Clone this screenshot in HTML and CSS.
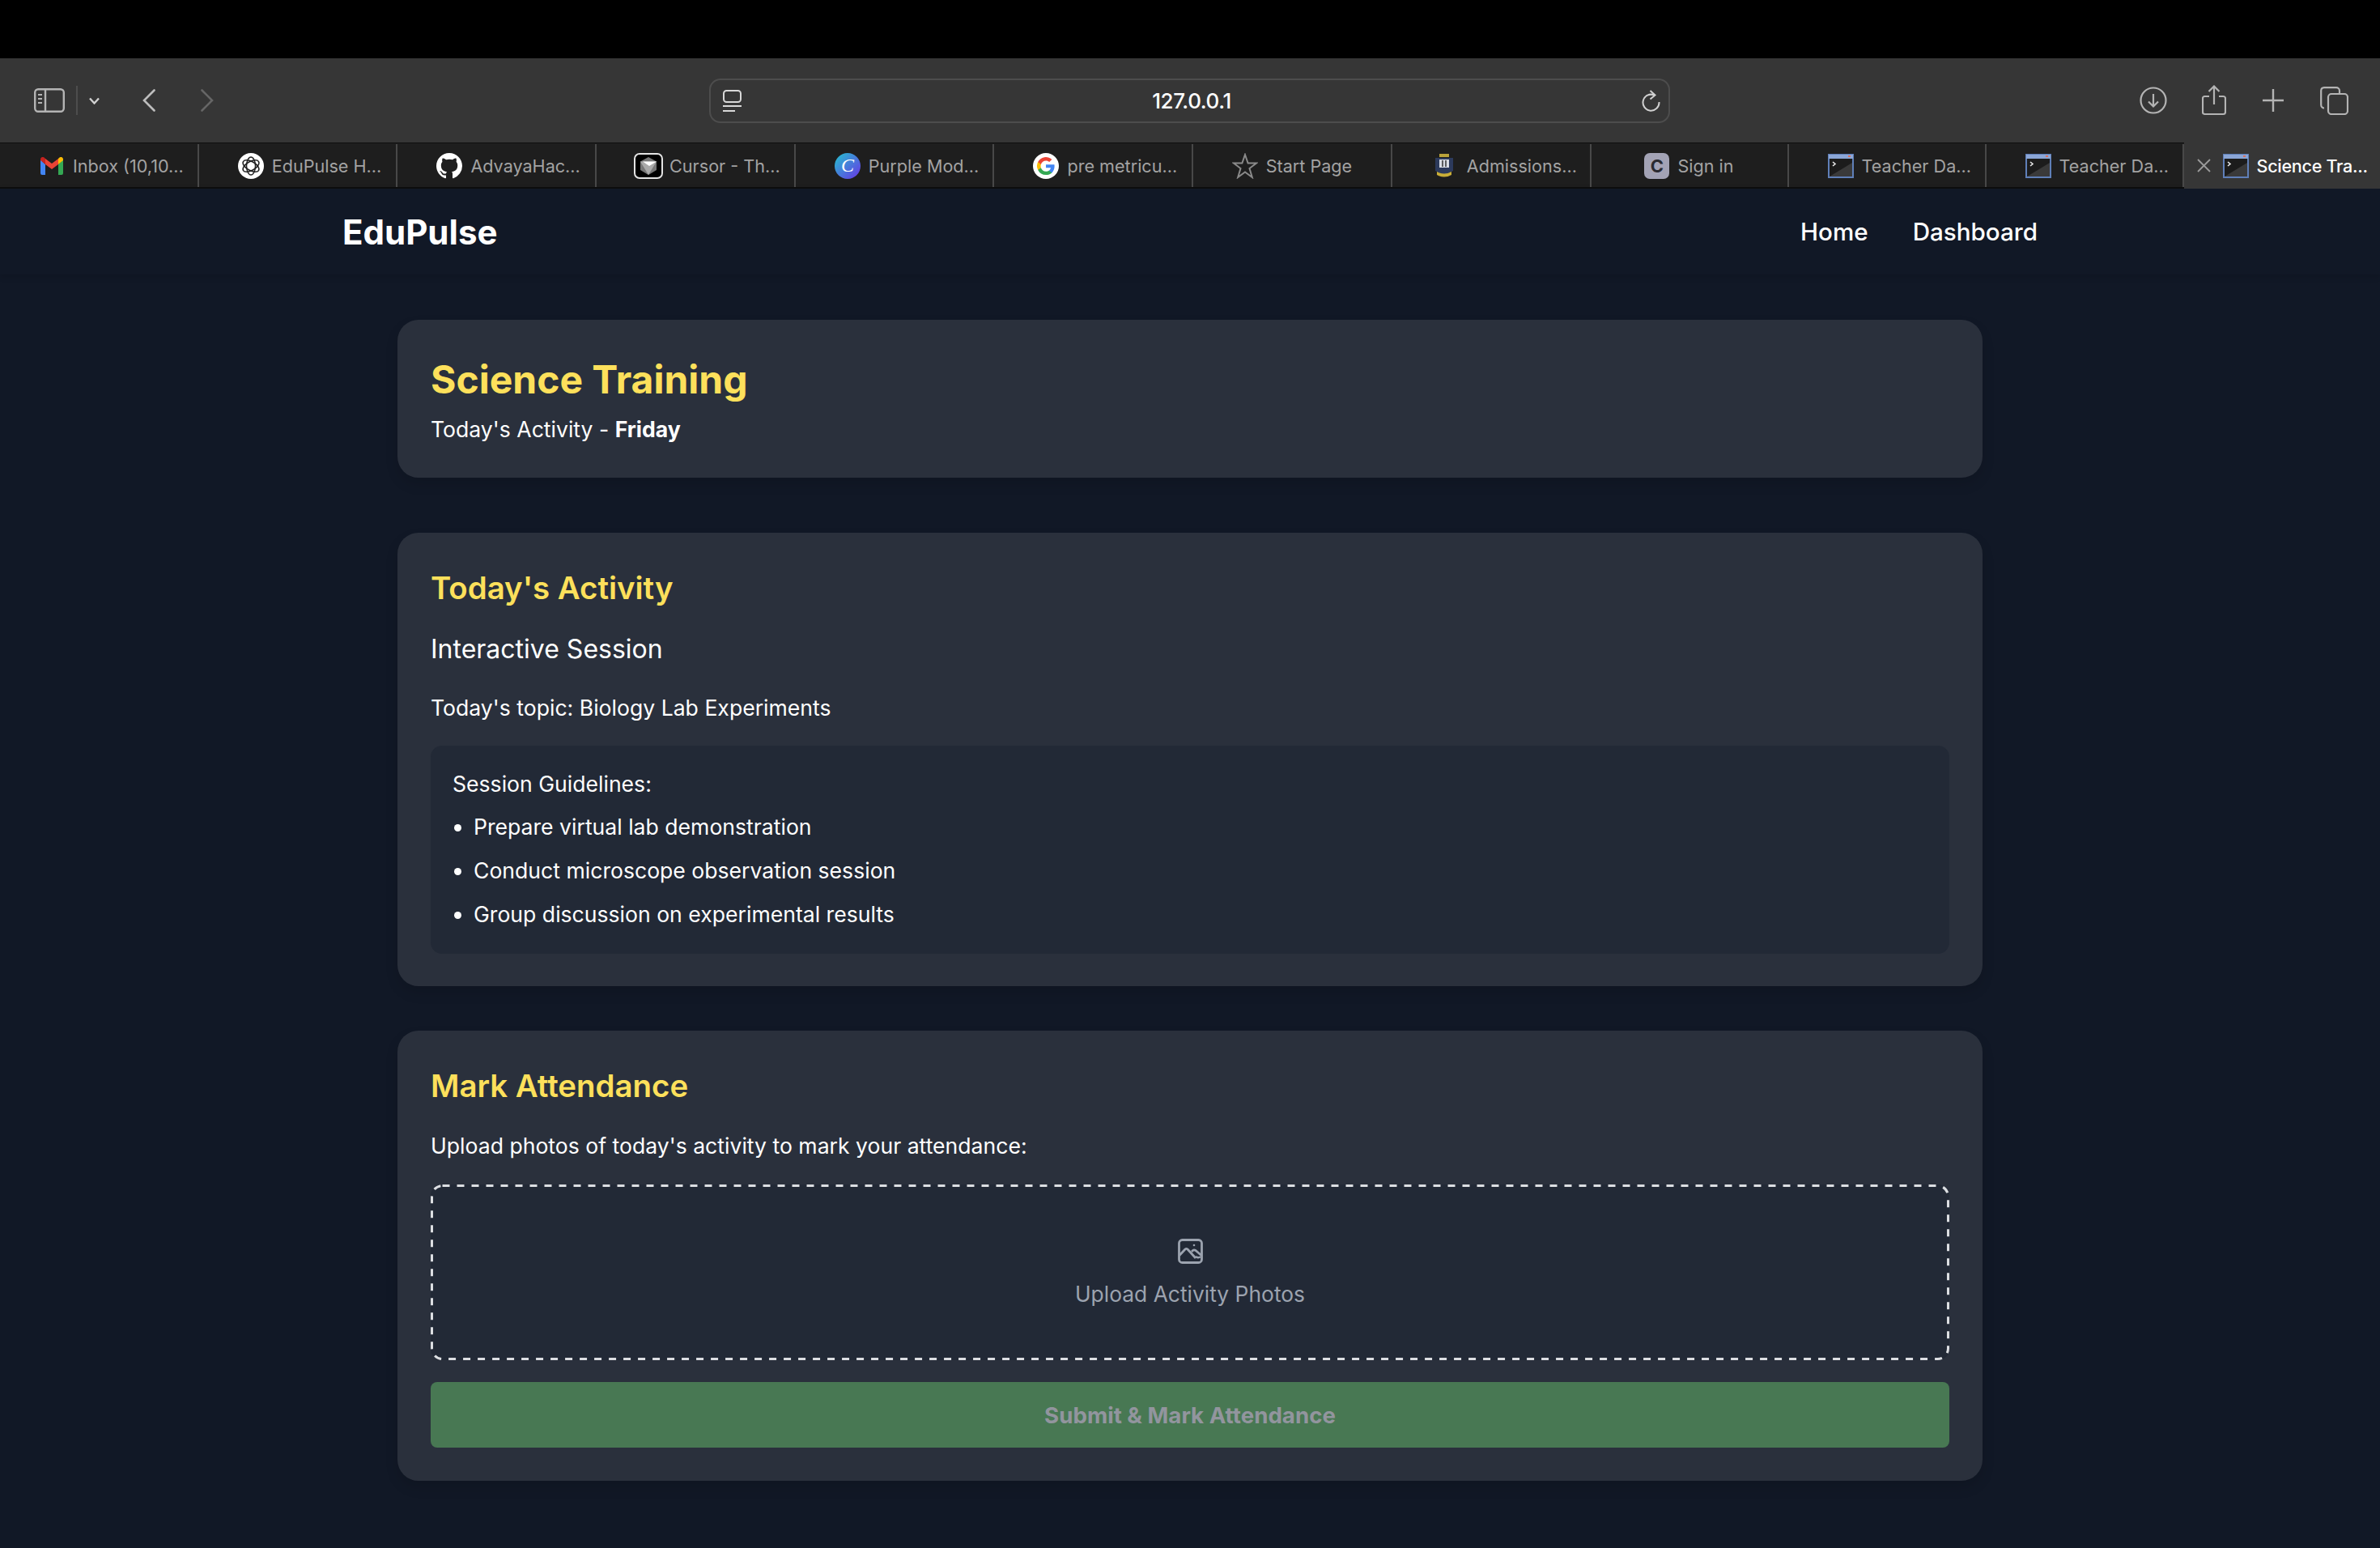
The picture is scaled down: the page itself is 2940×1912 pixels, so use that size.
FILE: index.html
```html
<!DOCTYPE html>
<html lang="en">
<head>
  <meta charset="UTF-8">
  <title>Science Training</title>
  <link rel="stylesheet" href="styles.css">
</head>
<body>
  <svg class="defs" width="0" height="0">
    <symbol id="term" viewBox="0 0 32 32">
      <rect x="0" y="1" width="32" height="30" fill="#5f7fb8"/>
      <rect x="1" y="2" width="30" height="5" fill="#8ba6d6"/>
      <rect x="25" y="3" width="3" height="2" fill="#d9705f"/>
      <rect x="2" y="7" width="28" height="22" fill="#1c1c1c"/>
      <path d="M2 29 30 29 30 12Z" fill="#3a3a3a"/>
      <path d="M6 11l3 2.5-3 2.5" fill="none" stroke="#e8e8e8" stroke-width="1.6"/>
    </symbol>
  </svg>

  <div class="menubar"></div>

  <div class="toolbar">
    <div class="tool-left">
      <svg class="ic-sidebar" width="38" height="30" viewBox="0 0 38 30" fill="none" stroke="#b4b4b4" stroke-width="2.4">
        <rect x="1.2" y="1.2" width="35.6" height="27.6" rx="4"/>
        <path d="M14 1.2v27.6"/>
        <path d="M5 8h5M5 13h5M5 18h5" stroke-width="2"/>
      </svg>
      <span class="tool-sep"></span>
      <svg class="ic-down" width="15" height="9" viewBox="0 0 15 9" fill="none" stroke="#d0d0d0" stroke-width="2.4"><path d="M2 1.5l5.500 6 5.500-6"/></svg>
      <svg class="ic-back" width="16" height="28" viewBox="0 0 16 28" fill="none" stroke="#bdbdbd" stroke-width="2.6" stroke-linecap="round"><path d="M14.500 1.500 2 14l12.500 12.500"/></svg>
      <svg class="ic-fwd" width="16" height="28" viewBox="0 0 16 28" fill="none" stroke="#666" stroke-width="2.6" stroke-linecap="round"><path d="M1.500 1.500 14 14 1.500 26.500"/></svg>
    </div>
    <div class="urlbar">
      <svg width="23" height="27" viewBox="0 0 23 27" fill="none" stroke="#d8d8d8" stroke-width="2">
        <rect x="1" y="1" width="21" height="14" rx="3.500"/>
        <path d="M0 20h23M0 26h15"/>
      </svg>
      <span class="url-text">127.0.0.1</span>
      <svg width="23" height="27" viewBox="0 0 23 27" fill="none" stroke="#d0d0d0" stroke-width="2">
        <path d="M15.500 6.500A10 10 0 1 0 21.500 15"/>
        <path d="M10.500 1l6 5.500-6 5"/>
      </svg>
    </div>
    <div class="tool-right">
      <svg width="34" height="34" viewBox="0 0 34 34" fill="none" stroke="#b4b4b4" stroke-width="2.200">
        <circle cx="17" cy="17" r="15.500"/>
        <path d="M17 9v15M11 18.500l6 6 6-6"/>
      </svg>
      <svg width="30" height="38" viewBox="0 0 30 38" fill="none" stroke="#b4b4b4" stroke-width="2.200">
        <path d="M9 14H3.500A2.500 2.500 0 0 0 1 16.500v17A2.500 2.500 0 0 0 3.500 36h23a2.500 2.500 0 0 0 2.500-2.500v-17a2.500 2.500 0 0 0-2.500-2.500H21"/>
        <path d="M15 24V2M8.500 8 15 1.500 21.500 8"/>
      </svg>
      <svg width="26" height="28" viewBox="0 0 26 28" fill="none" stroke="#b4b4b4" stroke-width="2.400"><path d="M13 0v28M0 14h26"/></svg>
      <svg width="35" height="35" viewBox="0 0 35 35" fill="none" stroke="#b4b4b4" stroke-width="2.200">
        <rect x="10" y="9" width="24" height="25" rx="4"/>
        <path d="M5 26.500A4 4 0 0 1 1.200 22.500V5A4 4 0 0 1 5 1.200h15A4 4 0 0 1 24 5v4"/>
      </svg>
    </div>
  </div>

  <div class="tabs">
    <div class="tab">
      <svg class="fav-m" width="28" height="22" viewBox="0 0 28 22">
        <path d="M0 3v17a2 2 0 0 0 2 2h4V9z" fill="#4285f4"/>
        <path d="M28 3v17a2 2 0 0 1-2 2h-4V9z" fill="#34a853"/>
        <path d="M22 2v7l6 -5V3c0-3-3-4-5-2z" fill="#fbbc04"/>
        <path d="M6 2v7l8 6 8-6V2l-8 6z" fill="#ea4335"/>
        <path d="M0 3v1l6 5V2L5 1C3-1 0 0 0 3z" fill="#c5221f"/>
      </svg>
      <span>Inbox (10,10...</span>
    </div>
    <div class="tab">
      <svg class="fav" viewBox="0 0 32 32">
        <circle cx="16" cy="16" r="16" fill="#fff"/>
        <g fill="none" stroke="#222" stroke-width="1.500">
          <ellipse cx="16" cy="16" rx="11" ry="5.500" transform="rotate(30 16 16)"/>
          <ellipse cx="16" cy="16" rx="11" ry="5.500" transform="rotate(90 16 16)"/>
          <ellipse cx="16" cy="16" rx="11" ry="5.500" transform="rotate(150 16 16)"/>
        </g>
      </svg>
      <span>EduPulse H...</span>
    </div>
    <div class="tab">
      <svg class="fav" viewBox="0 0 16 16"><path fill="#fff" d="M8 0C3.58 0 0 3.58 0 8c0 3.54 2.29 6.53 5.47 7.59.4.07.55-.17.55-.38 0-.19-.01-.82-.01-1.490-2.010.37-2.530-.49-2.690-.94-.09-.23-.48-.94-.82-1.130-.28-.15-.68-.52-.01-.53.63-.01 1.080.58 1.230.82.72 1.210 1.870.87 2.330.66.07-.52.28-.87.51-1.070-1.780-.2-3.640-.89-3.640-3.950 0-.87.31-1.590.82-2.150-.08-.2-.36-1.020.08-2.120 0 0 .67-.21 2.200.82.64-.18 1.320-.27 2-.27.68 0 1.360.09 2 .27 1.530-1.040 2.200-.82 2.200-.82.44 1.100.16 1.920.08 2.120.51.56.82 1.270.82 2.150 0 3.070-1.870 3.750-3.650 3.950.29.25.54.73.54 1.480 0 1.070-.01 1.930-.01 2.200 0 .21.15.46.55.38A8.013 8.013 0 0 0 16 8c0-4.420-3.580-8-8-8z"/></svg>
      <span>AdvayaHac...</span>
    </div>
    <div class="tab tab-tight">
      <svg class="fav fav-cursor" viewBox="0 0 36 32">
        <rect x="1" y="1" width="34" height="30" rx="6" fill="#000" stroke="#e4e4e4" stroke-width="2"/>
        <path d="M18 5 28 10.500V21L18 27 8 21V10.500Z" fill="#777"/>
        <path d="M8 10.500 28 10.500 18 27Z" fill="#aaa"/>
        <path d="M11 10.500 28 10.500 19 16Z" fill="#fff"/>
      </svg>
      <span>Cursor - Th...</span>
    </div>
    <div class="tab">
      <svg class="fav" viewBox="0 0 32 32">
        <defs><linearGradient id="canva" x1="0" y1="0" x2="1" y2="1"><stop offset="0" stop-color="#23c4cf"/><stop offset="1" stop-color="#6a32e6"/></linearGradient></defs>
        <circle cx="16" cy="16" r="16" fill="url(#canva)"/>
        <text x="16" y="23" text-anchor="middle" class="fav-letter">C</text>
      </svg>
      <span>Purple Mod...</span>
    </div>
    <div class="tab">
      <svg class="fav" viewBox="0 0 32 32">
        <circle cx="16" cy="16" r="16" fill="#fff"/>
        <g transform="translate(5 5) scale(.92)">
          <path fill="#4285f4" d="M23.500 12.300c0-.8-.1-1.600-.2-2.300H12v4.500h6.500a5.500 5.500 0 0 1-2.400 3.600v3h3.900c2.200-2.100 3.500-5.100 3.500-8.800z"/>
          <path fill="#34a853" d="M12 24c3.200 0 6-1.100 8-2.900l-3.900-3c-1.100.7-2.500 1.200-4.100 1.200-3.100 0-5.800-2.100-6.700-5H1.300v3.100A12 12 0 0 0 12 24z"/>
          <path fill="#fbbc05" d="M5.300 14.300a7.200 7.200 0 0 1 0-4.600V6.600h-4a12 12 0 0 0 0 10.800z"/>
          <path fill="#ea4335" d="M12 4.800c1.800 0 3.300.6 4.600 1.800L20 3.200A12 12 0 0 0 1.300 6.600l4 3.100c.9-2.800 3.600-4.900 6.700-4.900z"/>
        </g>
      </svg>
      <span>pre metricu...</span>
    </div>
    <div class="tab tab-center">
      <svg class="fav" width="30" height="32" viewBox="0 0 30 32" fill="none" stroke="#8a8a8a" stroke-width="2"><path d="M15 2l3.600 10.500H29l-8.500 6.500 3.300 11L15 23.500 6.200 30l3.300-11L1 12.500h10.400z"/></svg>
      <span>Start Page</span>
    </div>
    <div class="tab tab-crest">
      <svg class="fav-crest" width="24" height="32" viewBox="0 0 24 32">
        <path d="M6 1h12v4H6z" fill="#b9a23a"/>
        <path d="M1 6h22v16l-11 6-11-6z" fill="#2c3a5c"/>
        <rect x="6" y="8" width="12" height="10" fill="#d8dce4"/>
        <path d="M10 9v8M14 9v8" stroke="#333" stroke-width="1.500"/>
        <path d="M3 23q9 5 18 0v4q-9 5-18 0z" fill="#c9ae38"/>
      </svg>
      <span>Admissions...</span>
    </div>
    <div class="tab tab-center tab-narrow">
      <div class="fav-signin">C</div>
      <span>Sign in</span>
    </div>
    <div class="tab tab-narrow">
      <svg class="fav"><use href="#term"/></svg>
      <span>Teacher Da...</span>
    </div>
    <div class="tab tab-narrow">
      <svg class="fav"><use href="#term"/></svg>
      <span>Teacher Da...</span>
    </div>
    <div class="tab tab-active">
      <svg class="tab-close" width="17" height="17" viewBox="0 0 17 17" fill="none" stroke="#9a9a9a" stroke-width="1.800"><path d="M1 1l15 15M16 1 1 16"/></svg>
      <svg class="fav"><use href="#term"/></svg>
      <span>Science Tra...</span>
    </div>
  </div>

  <nav class="nav">
    <a class="logo">EduPulse</a>
    <div class="nav-links">
      <a>Home</a>
      <a>Dashboard</a>
    </div>
  </nav>

  <main class="main">
    <section class="card card-head">
      <h1>Science Training</h1>
      <p>Today's Activity - <b>Friday</b></p>
    </section>

    <section class="card card-activity">
      <h2>Today's Activity</h2>
      <h3>Interactive Session</h3>
      <p class="topic">Today's topic: Biology Lab Experiments</p>
      <div class="guidelines">
        <p>Session Guidelines:</p>
        <ul>
          <li>Prepare virtual lab demonstration</li>
          <li>Conduct microscope observation session</li>
          <li>Group discussion on experimental results</li>
        </ul>
      </div>
    </section>

    <section class="card card-attend">
      <h2>Mark Attendance</h2>
      <p class="upload-note">Upload photos of today's activity to mark your attendance:</p>
      <div class="dropzone">
        <svg class="dash" width="100%" height="100%">
          <rect x="1.500" y="1.500" width="1873" height="214" rx="13" fill="none" stroke="#dcdee2" stroke-width="3" stroke-dasharray="9 9"/>
        </svg>
        <svg class="photo" width="31" height="31" viewBox="0 0 31 31" fill="none" stroke="#9ca3af" stroke-width="2.800" stroke-linejoin="round">
          <rect x="1.500" y="1.500" width="28" height="28" rx="4"/>
          <path d="M2 20.500l7-7.500q1.500-1.300 3 0l10 11"/>
          <path d="M17 16l1.500-1.500q1.500-1.200 3.500 0l7 6"/>
          <path d="M22 22q3.500 2.500 6 0" stroke-width="2.400"/>
          <circle cx="20" cy="8" r="1.300" fill="#9ca3af" stroke="none"/>
        </svg>
        <span>Upload Activity Photos</span>
      </div>
      <button class="submit">Submit &amp; Mark Attendance</button>
    </section>
  </main>
</body>
</html>
```

FILE: styles.css
```css
* {
  box-sizing: border-box;
}
body {
  margin: 0;
  width: 2940px;
  height: 1912px;
  overflow: hidden;
  background-color: #111826;
  color: #fff;
  font-family: Inter, "Liberation Sans", sans-serif;
}
h1, h2, h3, p, ul {
  margin: 0;
  padding: 0;
}
.defs {
  position: absolute;
}
.menubar {
  height: 72px;
  background-color: #000;
}

/* browser toolbar */
.toolbar {
  display: grid;
  grid-template-columns: 876px 1187px 1fr;
  align-items: center;
  height: 104px;
  background-color: #363636;
}
.tool-left {
  display: flex;
  align-items: center;
  padding-left: 42px;
}
.tool-sep {
  width: 2px;
  height: 36px;
  margin: 0 13px 0 14px;
  background-color: #4d4d4d;
}
.ic-back {
  margin-left: 52px;
}
.ic-fwd {
  margin-left: 56px;
}
.urlbar {
  display: flex;
  align-items: center;
  justify-content: space-between;
  height: 55px;
  padding: 0 10px 0 15px;
  border: 2px solid #4d4d4d;
  border-radius: 14px;
}
.url-text {
  font-size: 26px;
  font-weight: 500;
  letter-spacing: -0.4px;
}
.tool-right {
  display: flex;
  align-items: center;
  padding-left: 580px;
  gap: 45px;
}
.tool-right svg:first-child {
  margin-right: -2px;
}

/* tab strip */
.tabs {
  display: flex;
  height: 57px;
  padding-top: 1px;
  background-color: #1e1e1e;
  border-top: 1px solid #0e0e0e;
  border-bottom: 2px solid #0e0e0e;
}
.tab {
  display: flex;
  flex: 0 0 245.7px;
  align-items: center;
  gap: 10px;
  padding-left: 48px;
  border-right: 2px solid #484848;
  font-size: 21.6px;
  color: #a3a3a3;
  white-space: nowrap;
  overflow: hidden;
}
.tab-narrow {
  flex-basis: 244px;
}
.tab-center {
  justify-content: center;
  padding-left: 0;
}
.tab-tight {
  padding-left: 46px;
  gap: 8px;
}
.tab-crest {
  padding-left: 52px;
  gap: 16px;
}
.tab-active {
  flex: 1;
  gap: 10px;
  margin: -2px 0 -2px;
  padding-left: 16px;
  border-right: none;
  background-color: #363636;
  color: #fff;
  font-weight: 500;
  letter-spacing: -0.3px;
}
.tab-close {
  flex-shrink: 0;
  margin-right: 5px;
}
.fav {
  flex-shrink: 0;
  width: 32px;
  height: 32px;
}
.fav-cursor {
  width: 36px;
}
.fav-m {
  flex-shrink: 0;
  margin: 0 2px;
}
.fav-letter {
  font-family: "Liberation Serif", serif;
  font-size: 24px;
  font-style: italic;
  fill: #fff;
}
.fav-signin {
  display: flex;
  flex-shrink: 0;
  align-items: center;
  justify-content: center;
  width: 31px;
  height: 32px;
  border-radius: 7px;
  background-color: #a3a3b5;
  color: #2a2a30;
  font-size: 22px;
  font-weight: 700;
}

/* page nav */
.nav {
  display: flex;
  align-items: center;
  justify-content: space-between;
  height: 106px;
  padding: 0 423px;
  background-color: #111826;
  box-shadow: 0 2px 8px rgba(0, 0, 0, 0.15);
}
.logo {
  font-size: 42px;
  font-weight: 700;
}
.nav-links {
  display: flex;
  gap: 55px;
  font-size: 29.6px;
  font-weight: 500;
}

/* cards */
.main {
  width: 1958px;
  margin: 56px 0 0 491px;
}
.card {
  padding: 40px 41px 40px;
  border-radius: 26px;
  background-color: #2a303c;
  box-shadow: 0 8px 16px rgba(0, 0, 0, 0.12);
}
.card-head {
  height: 195px;
  margin-bottom: 68px;
}
.card-activity {
  margin-bottom: 55px;
}
.card-attend {
  padding-bottom: 41px;
}
h1 {
  margin-top: 2px;
  font-size: 48px;
  line-height: 64px;
  font-weight: 700;
  color: #fde05b;
}
.card-head p {
  margin-top: 9px;
  font-size: 26.6px;
  line-height: 40px;
}
.card-head b {
  font-weight: 700;
}
h2 {
  font-size: 38.4px;
  line-height: 56px;
  font-weight: 600;
  color: #fde05b;
}
h3 {
  margin-top: 26px;
  font-size: 32px;
  line-height: 44px;
  font-weight: 400;
}
.topic {
  margin-top: 30px;
  font-size: 26.6px;
  line-height: 40px;
}
.guidelines {
  height: 257px;
  margin-top: 27px;
  padding: 27px 27px 0;
  border-radius: 14px;
  background-color: #222936;
  font-size: 26.6px;
  line-height: 40px;
}
.guidelines ul {
  margin-top: 13px;
  padding-left: 26px;
}
.guidelines li {
  margin-bottom: 14px;
}
.upload-note {
  margin-top: 26px;
  font-size: 26.6px;
  line-height: 40px;
}
.dropzone {
  position: relative;
  display: flex;
  flex-direction: column;
  align-items: center;
  height: 217px;
  margin-top: 28px;
  padding-top: 67px;
  border-radius: 14px;
  background-color: #222936;
  color: #9ca3af;
  font-size: 26.4px;
  line-height: 40px;
}
.dash {
  position: absolute;
  top: 0;
  left: 0;
}
.photo {
  margin-bottom: 17px;
}
.submit {
  display: block;
  width: 100%;
  height: 81px;
  margin-top: 27px;
  border: none;
  border-radius: 8px;
  background-color: #487853;
  color: #92959e;
  font-family: inherit;
  font-size: 27.7px;
  font-weight: 700;
}
```
